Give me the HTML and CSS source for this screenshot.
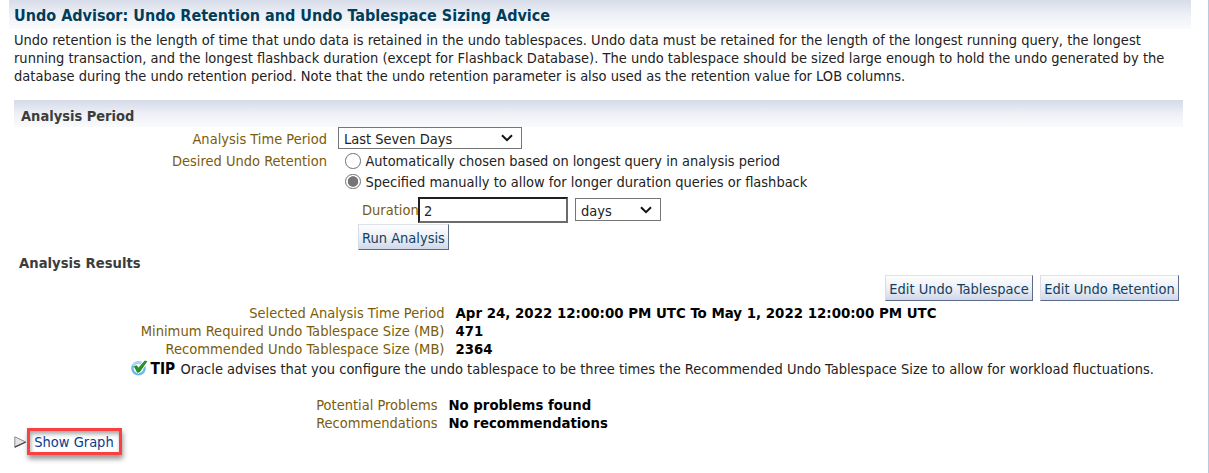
FILE: index.html
```
<!DOCTYPE html>
<html lang="en">
<head>
<meta charset="utf-8">
<title>Undo Advisor</title>
<link rel="stylesheet" href="styles.css">
</head>
<body>
<main class="page">
  <h1 class="page-title">Undo Advisor: Undo Retention and Undo Tablespace Sizing Advice</h1>
  <p class="intro">Undo retention is the length of time that undo data is retained in the undo tablespaces. Undo data must be retained for the length of the longest running query, the longest<br>running transaction, and the longest flashback duration (except for Flashback Database). The undo tablespace should be sized large enough to hold the undo generated by the<br>database during the undo retention period. Note that the undo retention parameter is also used as the retention value for LOB columns.</p>

  <h2 class="section-title">Analysis Period</h2>
  <div class="form">
    <div class="label period-label">Analysis Time Period</div>
    <div class="select period"><span>Last Seven Days</span><svg class="chevron" viewBox="0 0 12 8"><path d="M1 1.3 6 6.1 11 1.3"/></svg></div>
    <div class="label">Desired Undo Retention</div>
    <div class="option"><span class="radio"></span><span class="auto-text">Automatically chosen based on longest query in analysis period</span></div>
    <div class="option manual"><span class="radio checked"></span><span class="manual-text">Specified manually to allow for longer duration queries or flashback</span></div>
    <div class="duration"><span class="label">Duration</span><span class="input">2</span><span class="select unit"><span>days</span><svg class="chevron" viewBox="0 0 12 8"><path d="M1 1.3 6 6.1 11 1.3"/></svg></span></div>
    <button class="button run">Run Analysis</button>
  </div>

  <h2 class="results-title">Analysis Results</h2>
  <div class="actions"><button class="button edit-space">Edit Undo Tablespace</button><button class="button edit-retention">Edit Undo Retention</button></div>
  <dl class="facts">
    <dt class="selected">Selected Analysis Time Period</dt><dd class="dates">Apr 24, 2022 12:00:00 PM UTC To May 1, 2022 12:00:00 PM UTC</dd>
    <dt>Minimum Required Undo Tablespace Size (MB)</dt><dd>471</dd>
    <dt>Recommended Undo Tablespace Size (MB)</dt><dd>2364</dd>
  </dl>
  <div class="tip">
    <svg class="tip-icon" viewBox="0 0 17 16">
      <circle cx="7.5" cy="8.3" r="6.1" fill="#e9f6fe" stroke="#69b9ee" stroke-width="2.4"/>
      <path d="M11 3A6.2 6.2 0 0 0 2 5.6" fill="none" stroke="#b4def7" stroke-width="1.6"/>
      <path d="M4.4 7.2 7.3 10.3 14.8 1.8" fill="none" stroke="#fff" stroke-width="5"/>
      <path d="M3.4 6.6 5.6 5.8 7.4 8.2 13.8 1 15.8 1.4 8.4 12 6.4 12.2Z" fill="#229a22" stroke="#0d6b12" stroke-width=".7"/>
    </svg>
    <b>TIP</b><span>Oracle advises that you configure the undo tablespace to be three times the Recommended Undo Tablespace Size to allow for workload fluctuations.</span>
  </div>
  <dl class="facts findings">
    <dt>Potential Problems</dt><dd>No problems found</dd>
    <dt>Recommendations</dt><dd>No recommendations</dd>
  </dl>
  <div class="graph">
    <svg class="disclosure" viewBox="0 0 13 12"><path d="M.8.8 11.8 6 .8 11.2Z" fill="#e4e4e4" stroke="#8b8b8b"/><path d="M.8 11.2 11.8 6" fill="none" stroke="#444" stroke-width="1.3"/></svg>
    <a class="graph-link">Show Graph</a>
  </div>
</main>
</body>
</html>
```

FILE: styles.css
```
* { box-sizing: border-box; }
body {
  margin: 0;
  background: #fff;
  color: #222;
  font: 14.5px/18px "DejaVu Sans Condensed", "DejaVu Sans", sans-serif;
}
.page {
  width: 1209px;
  height: 473px;
  overflow: hidden;
  border-right: 1px solid #b6cbdf;
}
h1, h2, p, dl, dd { margin: 0; }
.page-title {
  height: 29px;
  margin: 0 17px 0 9px;
  padding: 6px 0 0 5px;
  background: linear-gradient(#d7dce9, #edf0f6 50%, #fbfbfc);
  color: #003d5b;
  font-size: 16px;
  line-height: 19px;
}
.intro {
  padding: 2px 0 0 14px;
  white-space: nowrap;
}
.section-title {
  height: 27px;
  margin: 15px 25px 0 14px;
  padding: 7px 0 0 7px;
  background: linear-gradient(#d5dae8, #edf0f6 50%, #fafafb);
  color: #3c3c3c;
  font-size: 14.5px;
  line-height: 18px;
}
.form {
  display: grid;
  grid-template-columns: 327px 1fr;
  grid-template-rows: 22px 22px 21px 32px 26px;
  column-gap: 11px;
  white-space: nowrap;
}
.label { color: #7a5c0a; text-align: right; line-height: 24px; }
.select {
  display: flex;
  align-items: center;
  justify-content: space-between;
  border: 1px solid #767676;
  background: #fff;
  padding: 2px 8px 0 5px;
}
.period { width: 184px; height: 22px; }
.chevron {
  width: 12px;
  height: 8px;
  margin-bottom: 2px;
  fill: none;
  stroke: #111;
  stroke-width: 2;
}
.option { display: flex; align-items: center; padding: 2px 0 0 7px; gap: 5px; }
.auto-text { font-size: 14.42px; }
.manual { grid-column: 2; padding-top: 0; }
.manual-text { font-size: 14.47px; }
.radio {
  width: 15.5px;
  height: 15.5px;
  border: 1px solid #707070;
  border-radius: 50%;
}
.checked { background: radial-gradient(circle, #757575 0 4.9px, #fff 5.6px); }
.duration { grid-column: 2; display: flex; padding: 5px 0 0 24px; }
.duration .label { width: 56px; line-height: 26px; }
.input {
  width: 150px;
  height: 26px;
  padding: 2px 4px;
  border: 2px solid #6b6b6b;
  border-top-color: #202020;
  border-left-color: #202020;
  line-height: 20px;
}
.unit { width: 86px; height: 23px; margin: 1px 0 0 7px; padding-top: 2px; }
.button {
  height: 26px;
  padding: 1px 0 0;
  border: 1px solid;
  border-color: #dfe2e6 #596b88 #596b88 #d8dce4;
  background: linear-gradient(#fdfdfe, #eef0f7 50%, #cfd7e9);
  color: #123f5c;
  font: inherit;
  text-align: center;
}
.run { grid-column: 2; width: 91px; margin-left: 20px; }
.results-title {
  padding: 4px 0 1px 19px;
  color: #3c3c3c;
  font-size: 14.7px;
  line-height: 18px;
}
.actions {
  display: flex;
  justify-content: flex-end;
  gap: 7px;
  padding: 2px 29px 0 0;
}
.edit-space { width: 148px; }
.edit-retention { width: 139px; }
.facts {
  display: grid;
  grid-template-columns: 444.5px 1fr;
  column-gap: 11px;
  padding-top: 3px;
  white-space: nowrap;
}
dt { color: #7a5c0a; text-align: right; font-size: 14.58px; }
.selected, .findings dt { font-size: 14.5px; }
dd { color: #000; font-weight: bold; font-size: 14.75px; }
.dates { font-size: 14.88px; }
.tip {
  display: flex;
  align-items: center;
  height: 21px;
  padding: 1px 0 0 130.5px;
  white-space: nowrap;
}
.tip-icon { width: 17px; height: 16px; margin: 0 3px 2px 0; }
.tip b { width: 30px; color: #000; font-size: 15.3px; }
.findings { grid-template-columns: 437.5px 1fr; padding-top: 17px; }
.graph { display: flex; align-items: center; padding: 0 0 0 14px; margin-top: -4px; }
.disclosure { width: 13px; height: 12px; margin-top: 1px; }
.graph-link {
  width: 95px;
  height: 27px;
  padding: 2px 1px 0 0;
  border: 3px solid #fa4141;
  box-shadow: 1px 4px 5px #999, inset 1px 3px 4px #aaa;
  color: #0c3a8c;
  text-align: center;
}
```
